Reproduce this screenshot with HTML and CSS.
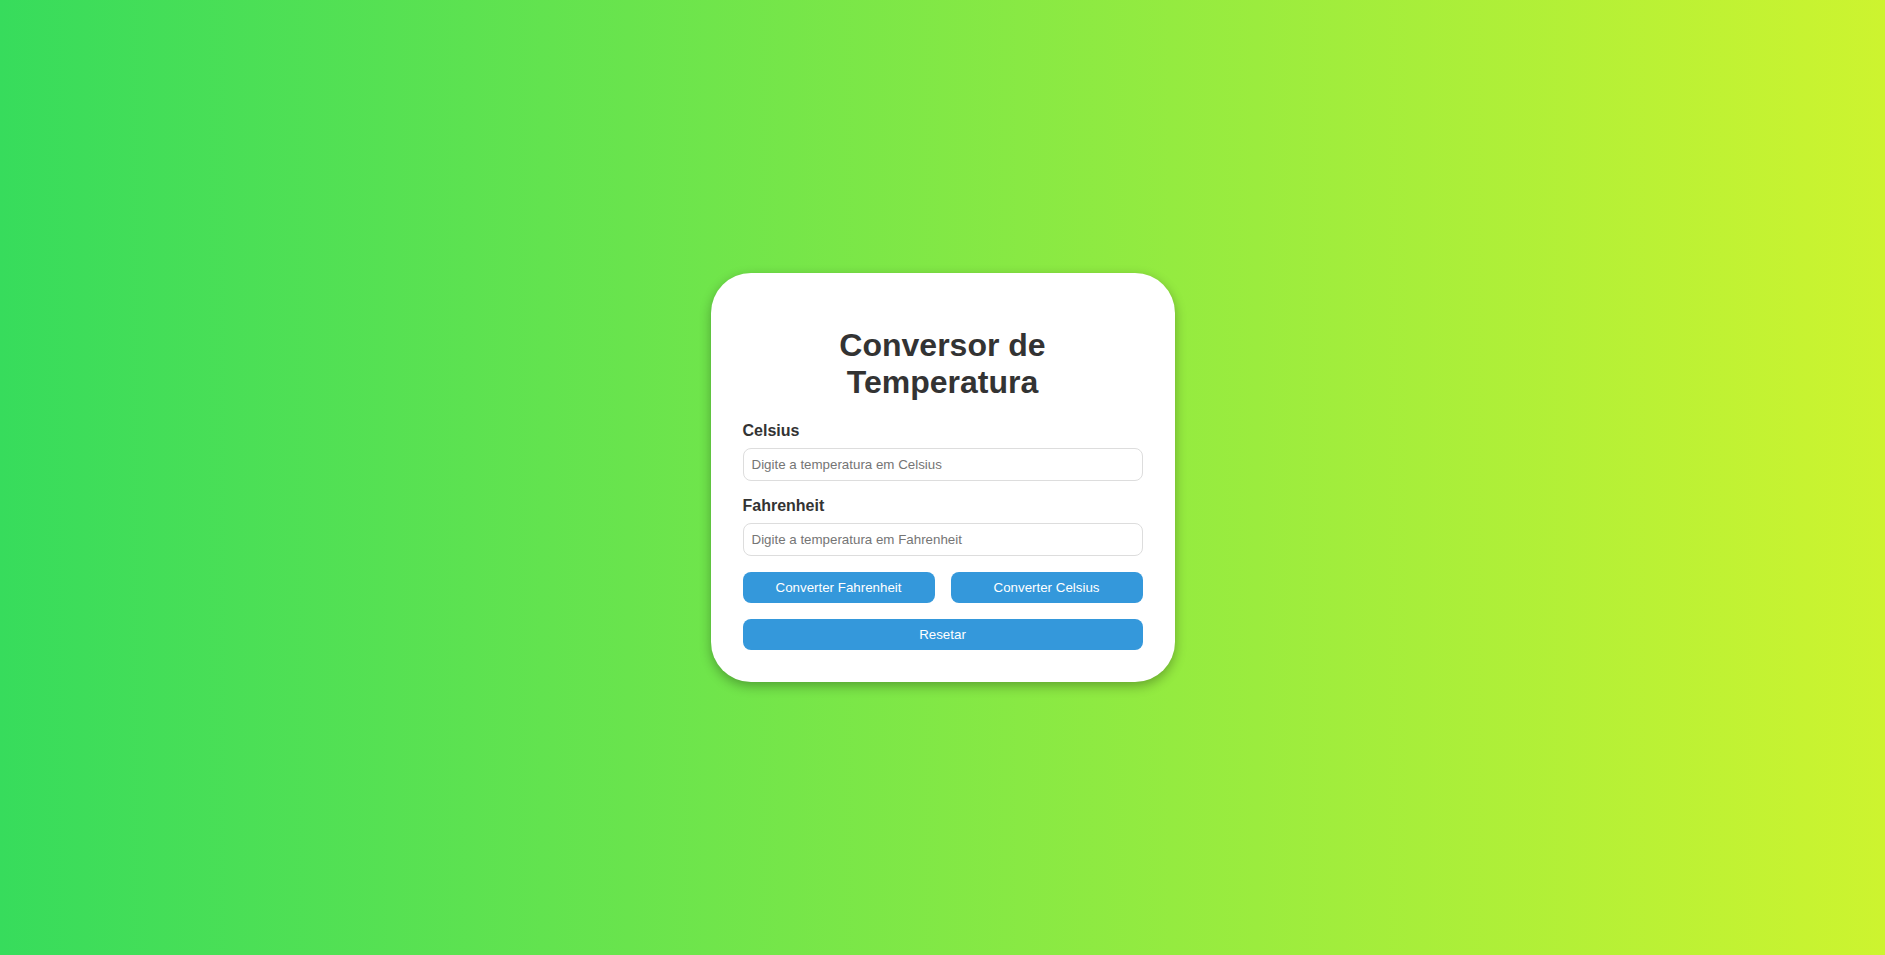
FILE: index.html
```html
<!DOCTYPE html>
<html lang="pt-BR">
<head>
<meta charset="UTF-8">
<title>Conversor de Temperatura</title>
<link rel="stylesheet" href="styles.css">
</head>
<body>
<main class="card">
  <h1 class="title">Conversor de Temperatura</h1>
  <label class="field-label" for="celsius">Celsius</label>
  <input class="field-input" id="celsius" type="number" placeholder="Digite a temperatura em Celsius">
  <label class="field-label" for="fahrenheit">Fahrenheit</label>
  <input class="field-input" id="fahrenheit" type="number" placeholder="Digite a temperatura em Fahrenheit">
  <div class="btn-row">
    <button class="btn" type="button">Converter Fahrenheit</button>
    <button class="btn" type="button">Converter Celsius</button>
  </div>
  <button class="btn btn-full" type="button">Resetar</button>
</main>
</body>
</html>
```
FILE: styles.css
```css
* { box-sizing: border-box; }

html, body {
  height: 100%;
}

body {
  margin: 0;
  font-family: "Liberation Sans", Arial, sans-serif;
  background: linear-gradient(90deg, #37dc5c 0%, #cdf42f 100%);
  display: flex;
  align-items: center;
  justify-content: center;
}

.card {
  width: 464px;
  padding: 32px;
  background: #fff;
  border-radius: 40px;
  box-shadow: 0 4px 12px rgba(0, 0, 0, 0.3);
  display: flex;
  flex-direction: column;
}

.title {
  margin: 21.44px 0;
  font-size: 32px;
  font-weight: bold;
  color: #333;
  text-align: center;
  line-height: normal;
}

.field-label {
  display: block;
  font-size: 16px;
  font-weight: bold;
  color: #333;
  margin-bottom: 8px;
}

.field-input {
  width: 100%;
  font-family: "Liberation Sans", Arial, sans-serif;
  font-size: 13.333px;
  padding: 8px;
  border: 1px solid #ddd;
  border-radius: 8px;
  margin: 0 0 16px;
  color: #333;
  outline: none;
}

.field-input::placeholder { color: #757575; }

.btn-row {
  display: grid;
  grid-template-columns: 1fr 1fr;
  gap: 16px;
  margin-bottom: 16px;
}

.btn {
  font-family: "Liberation Sans", Arial, sans-serif;
  font-size: 13.333px;
  padding: 8px;
  border: none;
  border-radius: 8px;
  background: #3498db;
  color: #fff;
  cursor: pointer;
  line-height: normal;
}

.btn-full { width: 100%; }
```
